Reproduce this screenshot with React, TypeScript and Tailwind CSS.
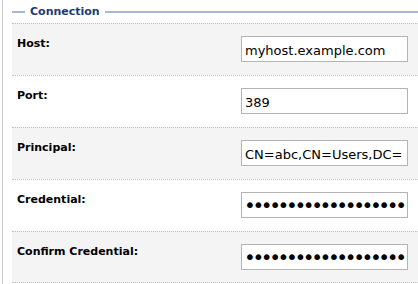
const FIELDS = [
  { label: 'Host:', value: 'myhost.example.com', type: 'text' },
  { label: 'Port:', value: '389', type: 'text' },
  { label: 'Principal:', value: 'CN=abc,CN=Users,DC=example,DC=com', type: 'text' },
  { label: 'Credential:', value: 'secretpassword1234567', type: 'password' },
  { label: 'Confirm Credential:', value: 'secretpassword1234567', type: 'password' },
]

export default function App() {
  return (
    <div className="w-[418px] h-[284px] overflow-hidden bg-white font-['DejaVu_Sans',sans-serif]">
      <div className="ml-[2px] h-full border-l border-[#c8c8c8] pl-[9px]">
        {/* legend */}
        <div className="flex items-center h-[23px]">
          <div className="w-[13px] h-[2px] bg-[#a5b8d6]" />
          <span className="px-[5px] text-[11px] font-bold text-[#1e3c72] leading-[13px]">Connection</span>
          <div className="flex-1 h-[2px] bg-[#a5b8d6]" />
        </div>

        {FIELDS.map((f, i) => (
          <div
            key={f.label}
            className={`flex h-[52px] border-t border-dotted border-[#c0c0c0] ${
              i % 2 === 0 ? 'bg-[#f4f4f4]' : 'bg-white'
            } ${i === FIELDS.length - 1 ? 'border-b' : ''}`}
          >
            <div className="w-[229px] pl-[5px] pt-[13px] text-[11px] leading-[13px] font-bold text-black">
              {f.label}
            </div>
            {f.type === 'password' ? (
              <input
                type="password"
                defaultValue={f.value}
                className="mt-[12px] w-[167px] h-[26px] border border-[#b4b4b4] bg-white pl-[2px] pr-[1px] py-0 text-[20px] leading-[22px] tracking-[-3.4px] text-black outline-none"
              />
            ) : (
              <input
                type="text"
                defaultValue={f.value}
                className="mt-[12px] w-[167px] h-[26px] border border-[#b4b4b4] bg-white pl-[3px] pr-[4px] pt-[4px] pb-[2px] text-[13px] text-black outline-none"
              />
            )}
          </div>
        ))}
      </div>
    </div>
  )
}
